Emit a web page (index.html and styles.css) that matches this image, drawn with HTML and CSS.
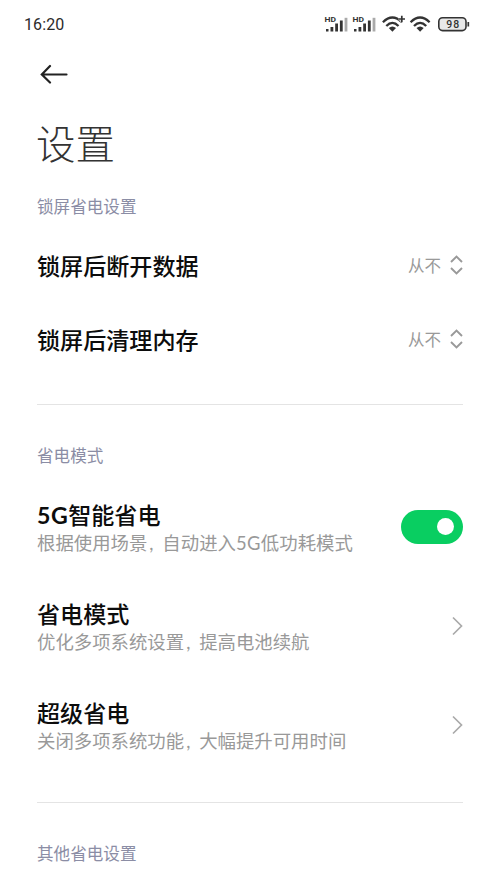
FILE: index.html
```html
<!DOCTYPE html>
<html lang="zh-CN">
<head>
<meta charset="utf-8">
<title>设置</title>
<link rel="stylesheet" href="styles.css">
</head>
<body>
<header class="status">
  <time class="clock">16:20</time>
  <svg class="status-icons" width="150" height="24" viewBox="320 12 150 24">
    <g id="signal" fill="#333">
      <text x="324.500" y="22.300" class="hd" textLength="11.500" lengthAdjust="spacingAndGlyphs">HD</text>
      <path d="M326 29h2.500v2.500H326zM330.500 27h2.800v4.500h-2.800zM335.200 23.500h2.800v8h-2.800zM339.900 20.500h2.800v11h-2.800z"/>
      <path d="M344.600 17.800h2.800v13.700h-2.800z" fill="#aaa"/>
    </g>
    <use href="#signal" x="28"/>
    <g id="wifi" fill="none" stroke="#333" stroke-width="2.300">
      <path d="M382.900 22.200Q392.400 12.800 401.900 22.200M386.300 26Q392.400 19.800 398.500 26"/>
      <path d="M392.400 31.800l-3.600-3.700q3.600-3 7.200 0z" fill="#333" stroke="none"/>
    </g>
    <use href="#wifi" x="27.700"/>
    <path d="M401.800 15.800v6.400M398.600 19h6.400" stroke="#fff" stroke-width="3"/>
    <path d="M401.800 15.800v6.400M398.600 19h6.400" stroke="#333" stroke-width="1.700"/>
    <rect x="438.800" y="17.800" width="27.200" height="12.800" rx="3.800" fill="#e8e8e8" stroke="#333" stroke-width="1.600"/>
    <path d="M468.300 22v4.500" stroke="#333" stroke-width="1.700"/>
    <text x="446.300" y="28.100" class="level" textLength="12.800">98</text>
  </svg>
</header>
<main class="page">
  <svg class="back" width="28" height="20" viewBox="0 0 28 20"><path d="M26.500 10.500H2M10 2L1.800 10.500 10 18.500"/></svg>
  <h1 class="title">设置</h1>
  <section class="group first">
    <h2 class="label">锁屏省电设置</h2>
    <div class="row pick"><span class="name">锁屏后断开数据</span><span class="value">从不<svg class="updown" width="13" height="20" viewBox="0 0 13 20"><path d="M1 7l5.500-5.500L12 7M1 13l5.500 5.500L12 13"/></svg></span></div>
    <div class="row pick"><span class="name">锁屏后清理内存</span><span class="value">从不<svg class="updown" width="13" height="20" viewBox="0 0 13 20"><path d="M1 7l5.500-5.500L12 7M1 13l5.500 5.500L12 13"/></svg></span></div>
  </section>
  <section class="group">
    <h2 class="label">省电模式</h2>
    <div class="row detail"><div class="text"><div class="name"><span class="latin">5G</span>智能省电</div><p class="note">根据使用场景<span class="comma">,</span>自动进入<span class="note-latin">5G</span>低功耗模式</p></div><span class="switch"></span></div>
    <div class="row detail"><div class="text"><div class="name">省电模式</div><p class="note">优化多项系统设置<span class="comma">,</span>提高电池续航</p></div><svg class="chevron" width="11" height="20" viewBox="0 0 11 20"><path d="M1 1.500L9.500 10 1 18.500"/></svg></div>
    <div class="row detail"><div class="text"><div class="name">超级省电</div><p class="note">关闭多项系统功能<span class="comma">,</span>大幅提升可用时间</p></div><svg class="chevron" width="11" height="20" viewBox="0 0 11 20"><path d="M1 1.500L9.500 10 1 18.500"/></svg></div>
  </section>
  <section class="group last"><h2 class="label">其他省电设置</h2></section>
</main>
</body>
</html>
```
FILE: styles.css
```css
* { box-sizing: border-box; margin: 0; }
body { background: #fff; color: #0c0c0c; font-family: Lato, "Noto Sans CJK SC", sans-serif; }
.status { display: flex; justify-content: space-between; height: 48px; padding: 12px 30px 0 24px; }
.clock { font: 400 16px/25px Roboto, sans-serif; letter-spacing: 0.1px; color: #2b2b2b; }
.hd { font: 700 8px Roboto, sans-serif; }
.level { font: 500 10.500px Roboto, sans-serif; fill: #333; }
.page { padding: 16px 37px 0; }
.back { display: block; margin-left: 3px; fill: none; stroke: #222; stroke-width: 2.200; stroke-linecap: round; }
.title { height: 60px; margin-top: 30px; margin-left: -1px; font-size: 39.500px; line-height: 60px; font-weight: 300; color: #333; }
.label { height: 24px; font-size: 16.600px; line-height: 24px; font-weight: 400; color: #8b8da5; }
.group { height: 398px; padding-top: 39px; border-top: 1px solid #e4e4e4; }
.first { height: 230px; padding-top: 21px; border: 0; }
.last { height: 80px; }
.row { display: flex; align-items: center; justify-content: space-between; }
.pick { height: 74px; }
.label + .pick { margin-top: 10px; }
.detail { height: 99px; }
.label + .detail { margin-top: 9px; }
.text { padding-top: 4px; }
.name { font-size: 23.100px; line-height: 29px; font-weight: 500; }
.latin { font-weight: 700; letter-spacing: 0.5px; }
.note { font-size: 18.400px; line-height: 27px; color: #999; white-space: nowrap; }
.note-latin { letter-spacing: 0.4px; }
.comma { display: inline-block; width: 15px; padding-left: 2px; }
.value { display: flex; align-items: center; gap: 9px; font-size: 16.500px; line-height: 24px; color: #999; }
.updown, .chevron { fill: none; stroke: #999; stroke-width: 1.900; }
.updown { margin-bottom: 2px; }
.chevron { stroke: #aaa; stroke-width: 1.700; }
.switch { display: flex; justify-content: flex-end; align-items: center; width: 62px; height: 34px; padding-right: 9px; border-radius: 17px; background: #09ce61; }
.switch::after { content: ""; width: 17px; height: 17px; border-radius: 50%; background: #fff; }
```
